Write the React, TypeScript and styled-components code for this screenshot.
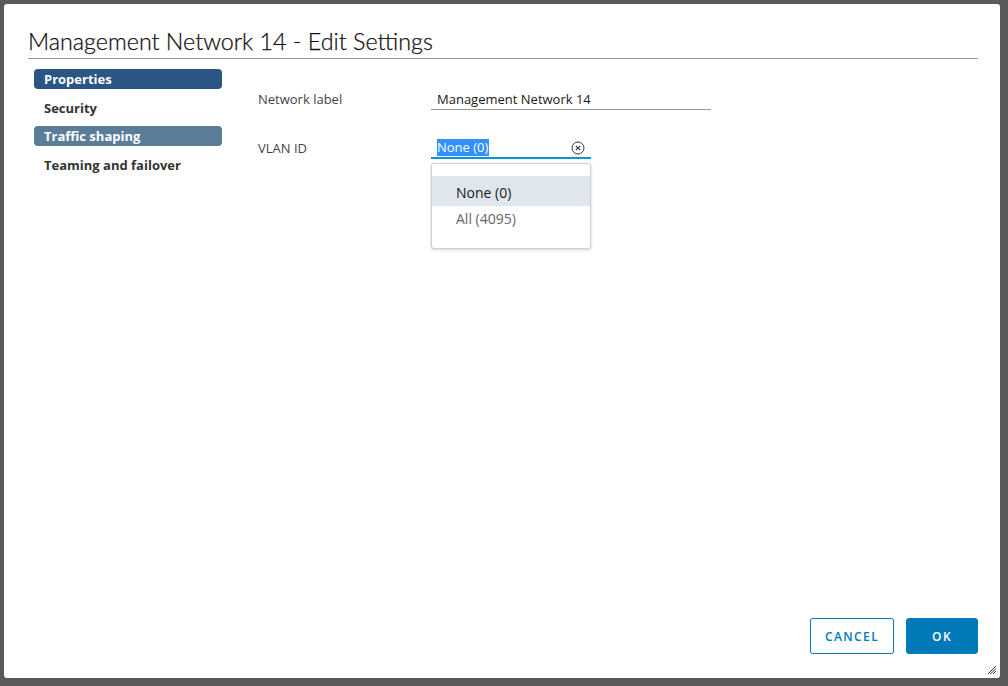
import React from 'react'
import styled, { createGlobalStyle } from 'styled-components'

const GlobalStyle = createGlobalStyle`
  html, body {
    margin: 0;
    padding: 0;
    background: #5a5a5a;
    font-family: "Open Sans", Lato, sans-serif;
  }
`

const Backdrop = styled.div`
  width: 1008px;
  height: 686px;
  padding: 4px 8px 8px 4px;
  box-sizing: border-box;
`

const Dialog = styled.div`
  position: relative;
  width: 996px;
  height: 674px;
  background: #fff;
  border-radius: 3px;
  box-sizing: border-box;
  padding: 22px 22px 24px 24px;
  display: flex;
  flex-direction: column;
`

const Title = styled.h1`
  margin: 0;
  font-family: Lato, "Open Sans", sans-serif;
  font-size: 23.3px;
  font-weight: 300;
  line-height: 30px;
  color: #111;
  -webkit-text-stroke: 0.25px #111;
`

const Divider = styled.div`
  height: 1px;
  background: #9a9a9a;
  margin-top: 2px;
`

const Body = styled.div`
  display: flex;
  flex: 1;
  padding-top: 10px;
`

const Nav = styled.nav`
  width: 188px;
  margin-left: 6px;
  display: flex;
  flex-direction: column;
`

const NavItem = styled.div<{ $tone?: 'active' | 'muted' }>`
  height: 20px;
  margin-bottom: 8.5px;
  line-height: 20px;
  padding-left: 10px;
  border-radius: 4px;
  font-size: 13px;
  font-weight: 700;
  color: ${p => (p.$tone ? '#fff' : '#333')};
  background: ${p =>
    p.$tone === 'active' ? '#2b5584' : p.$tone === 'muted' ? '#5b7d9a' : 'transparent'};
`

const Form = styled.div`
  margin-left: 36px;
  padding-top: 19px;
  display: flex;
  flex-direction: column;
  gap: 27px;
`

const Row = styled.div`
  display: flex;
  align-items: flex-end;
`

const Label = styled.div`
  width: 173px;
  font-size: 13px;
  color: #454545;
  line-height: 20px;
  padding-bottom: 1px;
`

const Field = styled.div<{ $width: number; $focused?: boolean }>`
  position: relative;
  width: ${p => p.$width}px;
  height: 22px;
  padding-left: 6px;
  box-sizing: border-box;
  display: flex;
  align-items: center;
  border-bottom: ${p => (p.$focused ? '2px solid #0a95d8' : '1px solid #9a9a9a')};
  font-size: 13px;
  color: #1a1a1a;
`

const Selected = styled.span`
  background: #3390ff;
  color: #fff;
  padding: 0 1px 0 0;
  line-height: 17px;
`

const ClearIcon = styled.svg`
  position: absolute;
  right: 6px;
  top: 4px;
`

const Menu = styled.div`
  position: absolute;
  left: 0;
  top: 26px;
  width: 160px;
  box-sizing: border-box;
  background: #fff;
  border: 1px solid #cfcfcf;
  border-radius: 3px;
  box-shadow: 0 1px 3px rgba(0, 0, 0, 0.18);
  padding: 12px 0 16px;
`

const Option = styled.div<{ $active?: boolean }>`
  height: ${p => (p.$active ? 30 : 26)}px;
  line-height: ${p => (p.$active ? 30 : 26)}px;
  padding: ${p => (p.$active ? 2 : 0)}px 0 0 24px;
  box-sizing: border-box;
  font-size: 14px;
  color: ${p => (p.$active ? '#1a1a1a' : '#666')};
  background: ${p => (p.$active ? '#dfe6ee' : 'transparent')};
`

const Footer = styled.div`
  display: flex;
  justify-content: flex-end;
  gap: 12px;
`

const Button = styled.button<{ $primary?: boolean }>`
  height: 36px;
  width: ${p => (p.$primary ? 72 : 84)}px;
  padding: 0;
  border-radius: 3px;
  border: 1px solid #0079b8;
  background: ${p => (p.$primary ? '#0079b8' : '#fff')};
  color: ${p => (p.$primary ? '#fff' : '#0079b8')};
  font-family: "Open Sans", Lato, sans-serif;
  font-size: 12px;
  font-weight: 600;
  letter-spacing: 1.4px;
`

const Grip = styled.svg`
  position: absolute;
  right: 4px;
  bottom: 4px;
`

export default function App() {
  return (
    <>
      <GlobalStyle />
      <Backdrop>
        <Dialog>
          <Title>Management Network 14 - Edit Settings</Title>
          <Divider />
          <Body>
            <Nav>
              <NavItem $tone="active">Properties</NavItem>
              <NavItem>Security</NavItem>
              <NavItem $tone="muted">Traffic shaping</NavItem>
              <NavItem>Teaming and failover</NavItem>
            </Nav>
            <Form>
              <Row>
                <Label>Network label</Label>
                <Field $width={280}>Management Network 14</Field>
              </Row>
              <Row>
                <Label>VLAN ID</Label>
                <Field $width={160} $focused>
                  <Selected>None (0)</Selected>
                  <ClearIcon width="14" height="14" viewBox="0 0 14 14">
                    <circle cx="7" cy="7" r="6" fill="none" stroke="#333" strokeWidth="1" />
                    <path d="M4.8 4.8 L9.2 9.2 M9.2 4.8 L4.8 9.2" stroke="#333" strokeWidth="1.1" />
                  </ClearIcon>
                  <Menu>
                    <Option $active>None (0)</Option>
                    <Option>All (4095)</Option>
                  </Menu>
                </Field>
              </Row>
            </Form>
          </Body>
          <Footer>
            <Button>CANCEL</Button>
            <Button $primary>OK</Button>
          </Footer>
          <Grip width="8" height="8" viewBox="0 0 8 8">
            <path d="M8 0 L0 8 M8 2.5 L2.5 8 M8 5 L5 8" stroke="#333" strokeWidth="1" />
          </Grip>
        </Dialog>
      </Backdrop>
    </>
  )
}
